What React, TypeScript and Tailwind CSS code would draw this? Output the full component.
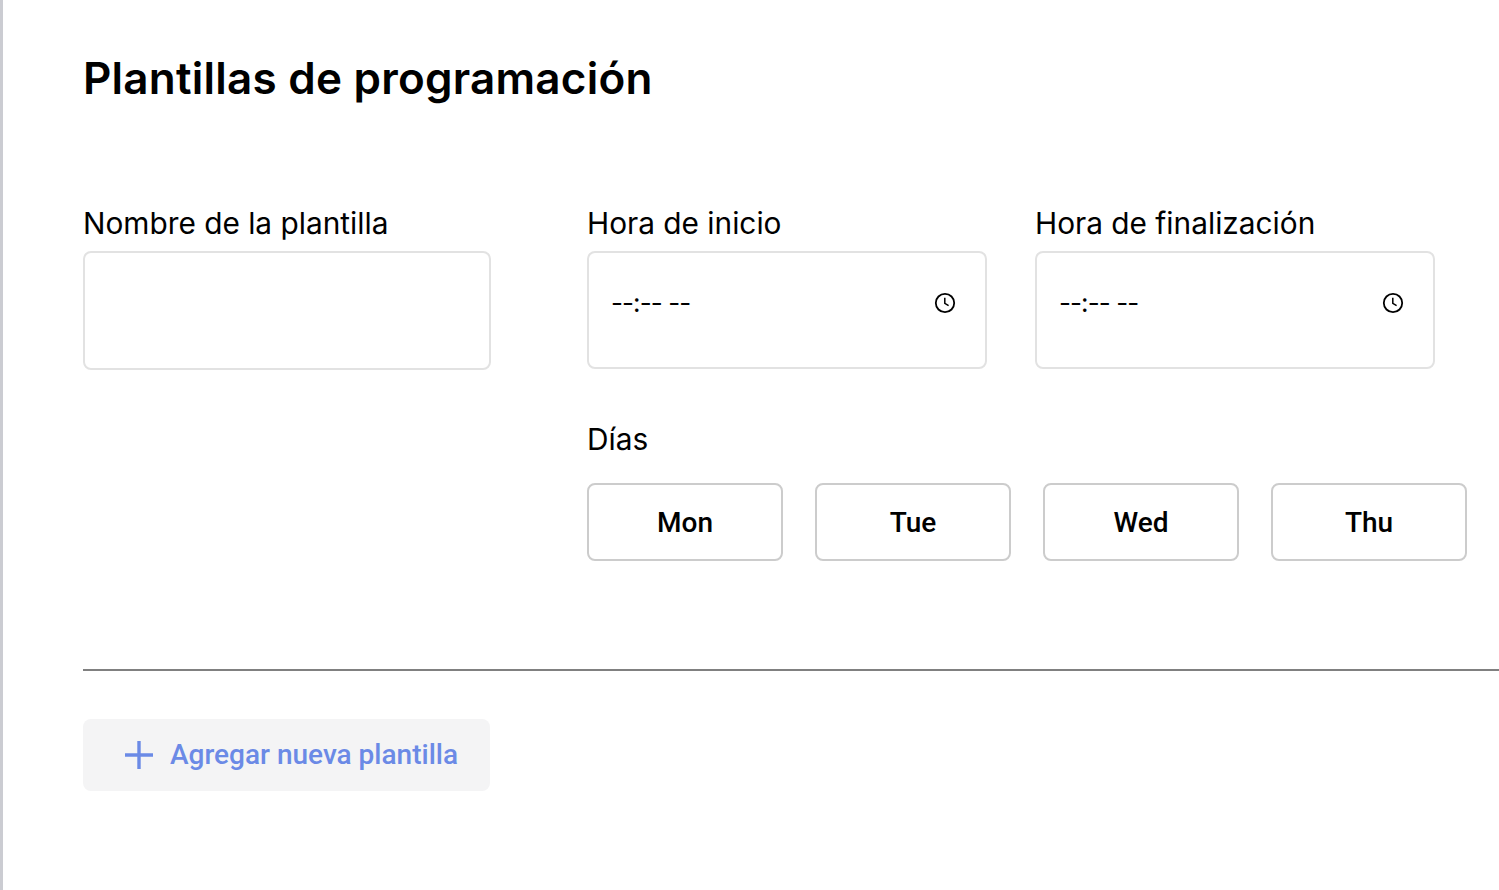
import React from 'react'

const labelText = "block text-[29.8px] leading-[38px] text-black font-['Inter',sans-serif]"

function ClockIcon() {
  return (
    <svg width="22" height="22" viewBox="0 0 22 22" fill="none" stroke="#000" strokeWidth="1.8">
      <circle cx="11" cy="11" r="9.2" />
      <path d="M10.8 5.8V11.4L14.6 13.6" strokeWidth="1.5" />
    </svg>
  )
}

function TimeField({ label }: { label: string }) {
  return (
    <div className="w-[400px] shrink-0">
      <label className={`${labelText} h-[47px]`}>{label}</label>
      <div className="flex items-center justify-between h-[118px] border-2 border-[#e2e2e2] rounded-[8px] pl-[22px] pr-[29px] pb-[14px]">
        <span className="font-['Inter',sans-serif] text-[26px] leading-[30px] tracking-[-0.9px] text-black">--:-- --</span>
        <ClockIcon />
      </div>
    </div>
  )
}

export default function App() {
  const days = ['Mon', 'Tue', 'Wed', 'Thu']

  return (
    <div className="w-[1499px] h-[890px] overflow-hidden bg-white border-l-[3px] border-[#cbccd2] pl-[80px] pt-[50px]">
      <h1 className="text-[44px] leading-[56px] tracking-[0.23px] font-semibold text-black h-[154px] font-['Inter',sans-serif]">Plantillas de programación</h1>

      <div className="flex gap-[96px] h-[465px]">
        <div className="w-[408px] shrink-0">
          <label className={`${labelText} h-[47px]`}>Nombre de la plantilla</label>
          <input className="block w-full h-[119px] border-2 border-[#e2e2e2] rounded-[8px]" />
        </div>

        <div className="shrink-0">
          <div className="flex gap-[48px]">
            <TimeField label="Hora de inicio" />
            <TimeField label="Hora de finalización" />
          </div>
          <label className={`${labelText} mt-[51px] h-[63px]`}>Días</label>
          <div className="flex gap-[32px]">
            {days.map(d => (
              <button key={d} type="button" className="w-[196px] h-[78px] shrink-0 border-2 border-[#cccccc] rounded-[8px] bg-white pt-[2px] font-['Roboto',sans-serif] font-medium text-[28px] text-black">
                {d}
              </button>
            ))}
          </div>
        </div>
      </div>

      <hr className="border-0 border-t-2 border-[#808080] -mr-[10px]" />

      <button type="button" className="flex items-center mt-[48px] w-[407px] h-[72px] bg-[#f4f4f5] rounded-[8px] pl-[41px]">
        <svg width="30" height="30" viewBox="0 0 30 30" fill="none" stroke="#6b8ae6" strokeWidth="3.4">
          <path d="M15 1V29M1 15H29" />
        </svg>
        <span className="ml-[16px] font-['Roboto',sans-serif] font-medium text-[28px] text-[#6b8ae6]">Agregar nueva plantilla</span>
      </button>
    </div>
  )
}
